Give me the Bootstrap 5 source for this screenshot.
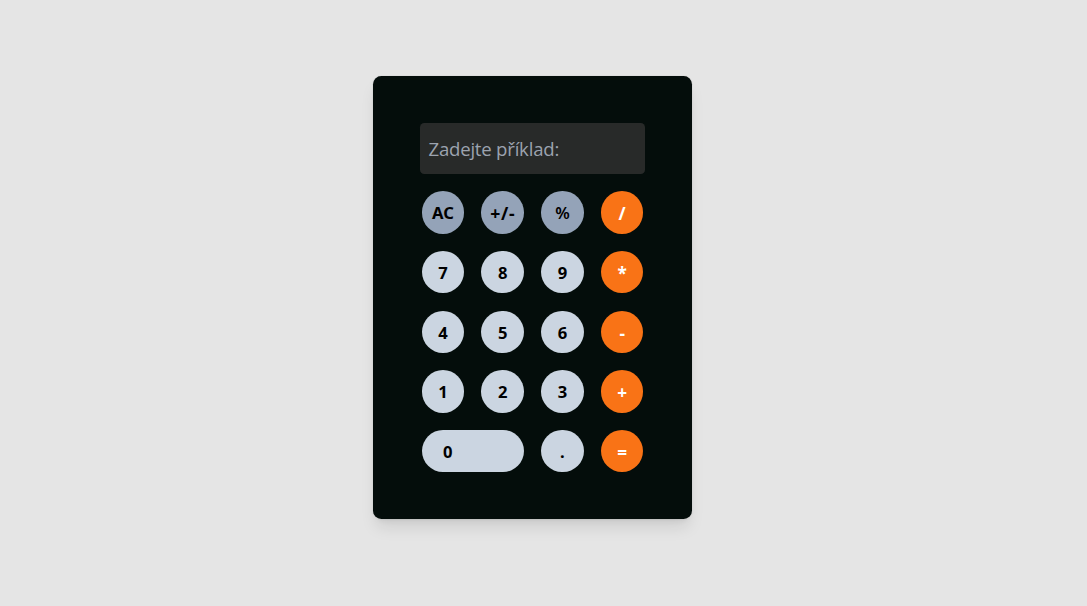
<!DOCTYPE html>
<html lang="cs">
<head>
<meta charset="utf-8">
<meta name="viewport" content="width=device-width, initial-scale=1">
<title>Kalkulačka</title>
<link href="https://cdn.jsdelivr.net/npm/bootstrap@5.3.0/dist/css/bootstrap.min.css" rel="stylesheet">
<style>
  body { background: #e5e5e5; font-family: "Noto Sans", "Open Sans", sans-serif; }
  .page { padding: 76px 22px 0 0; background: #e5e5e5; }
  .calc {
    width: 319.4px; height: 443px; padding: 47px 47.2px;
    background: #040d0b; border-radius: 8.5px;
    box-shadow: 0 10.7px 16px -3.2px rgba(0,0,0,.1), 0 4.3px 6.4px -4.3px rgba(0,0,0,.1), 0 0 1px rgba(0,0,0,.25);
  }
  .screen {
    height: 51.2px; padding: 0 8.5px 1px; background: #282a29; color: #fff;
    border: 0; border-radius: 4.3px; font-family: "Open Sans", "Noto Sans", sans-serif; font-size: 18.6px; letter-spacing: -.22px; outline: 0;
  }
  .screen::placeholder { color: #9ca3af; opacity: 1; }
  .keys { display: grid; grid-template-columns: repeat(4, 42.67px); grid-auto-rows: 42.6px; gap: 17.07px; margin: 17px 0 0 1.7px; }
  .key { border: 0; padding: 1px 0 0; font-size: 16.6px; line-height: 25.6px; font-weight: 700; color: #000; background: #cbd5e1; }
  .key-fn { background: #94a3b8; }
  .key-sign { padding-top: 2px; font-size: 17.6px; letter-spacing: .6px; }
  .key-pct { font-weight: 600; }
  .key-op { padding-top: 3px; background: #f97316; color: #fff; font-size: 17.2px; }
  .key-zero { grid-column: span 2; padding-left: 21.3px; }
</style>
</head>
<body>
<main class="page d-flex justify-content-center align-items-start min-vh-100">
  <section class="calc flex-shrink-0">
    <input class="screen d-block w-100" type="text" placeholder="Zadejte příklad:" aria-label="Zadejte příklad">
    <div class="keys">
      <button class="key key-fn rounded-circle">AC</button>
      <button class="key key-fn key-sign rounded-circle">+/-</button>
      <button class="key key-fn key-pct rounded-circle">%</button>
      <button class="key key-op rounded-circle">/</button>
      <button class="key rounded-circle">7</button>
      <button class="key rounded-circle">8</button>
      <button class="key rounded-circle">9</button>
      <button class="key key-op rounded-circle">*</button>
      <button class="key rounded-circle">4</button>
      <button class="key rounded-circle">5</button>
      <button class="key rounded-circle">6</button>
      <button class="key key-op rounded-circle">-</button>
      <button class="key rounded-circle">1</button>
      <button class="key rounded-circle">2</button>
      <button class="key rounded-circle">3</button>
      <button class="key key-op rounded-circle">+</button>
      <button class="key key-zero rounded-pill text-start">0</button>
      <button class="key rounded-circle">.</button>
      <button class="key key-op rounded-circle">=</button>
    </div>
  </section>
</main>
<script src="https://cdn.jsdelivr.net/npm/bootstrap@5.3.0/dist/js/bootstrap.bundle.min.js"></script>
</body>
</html>
